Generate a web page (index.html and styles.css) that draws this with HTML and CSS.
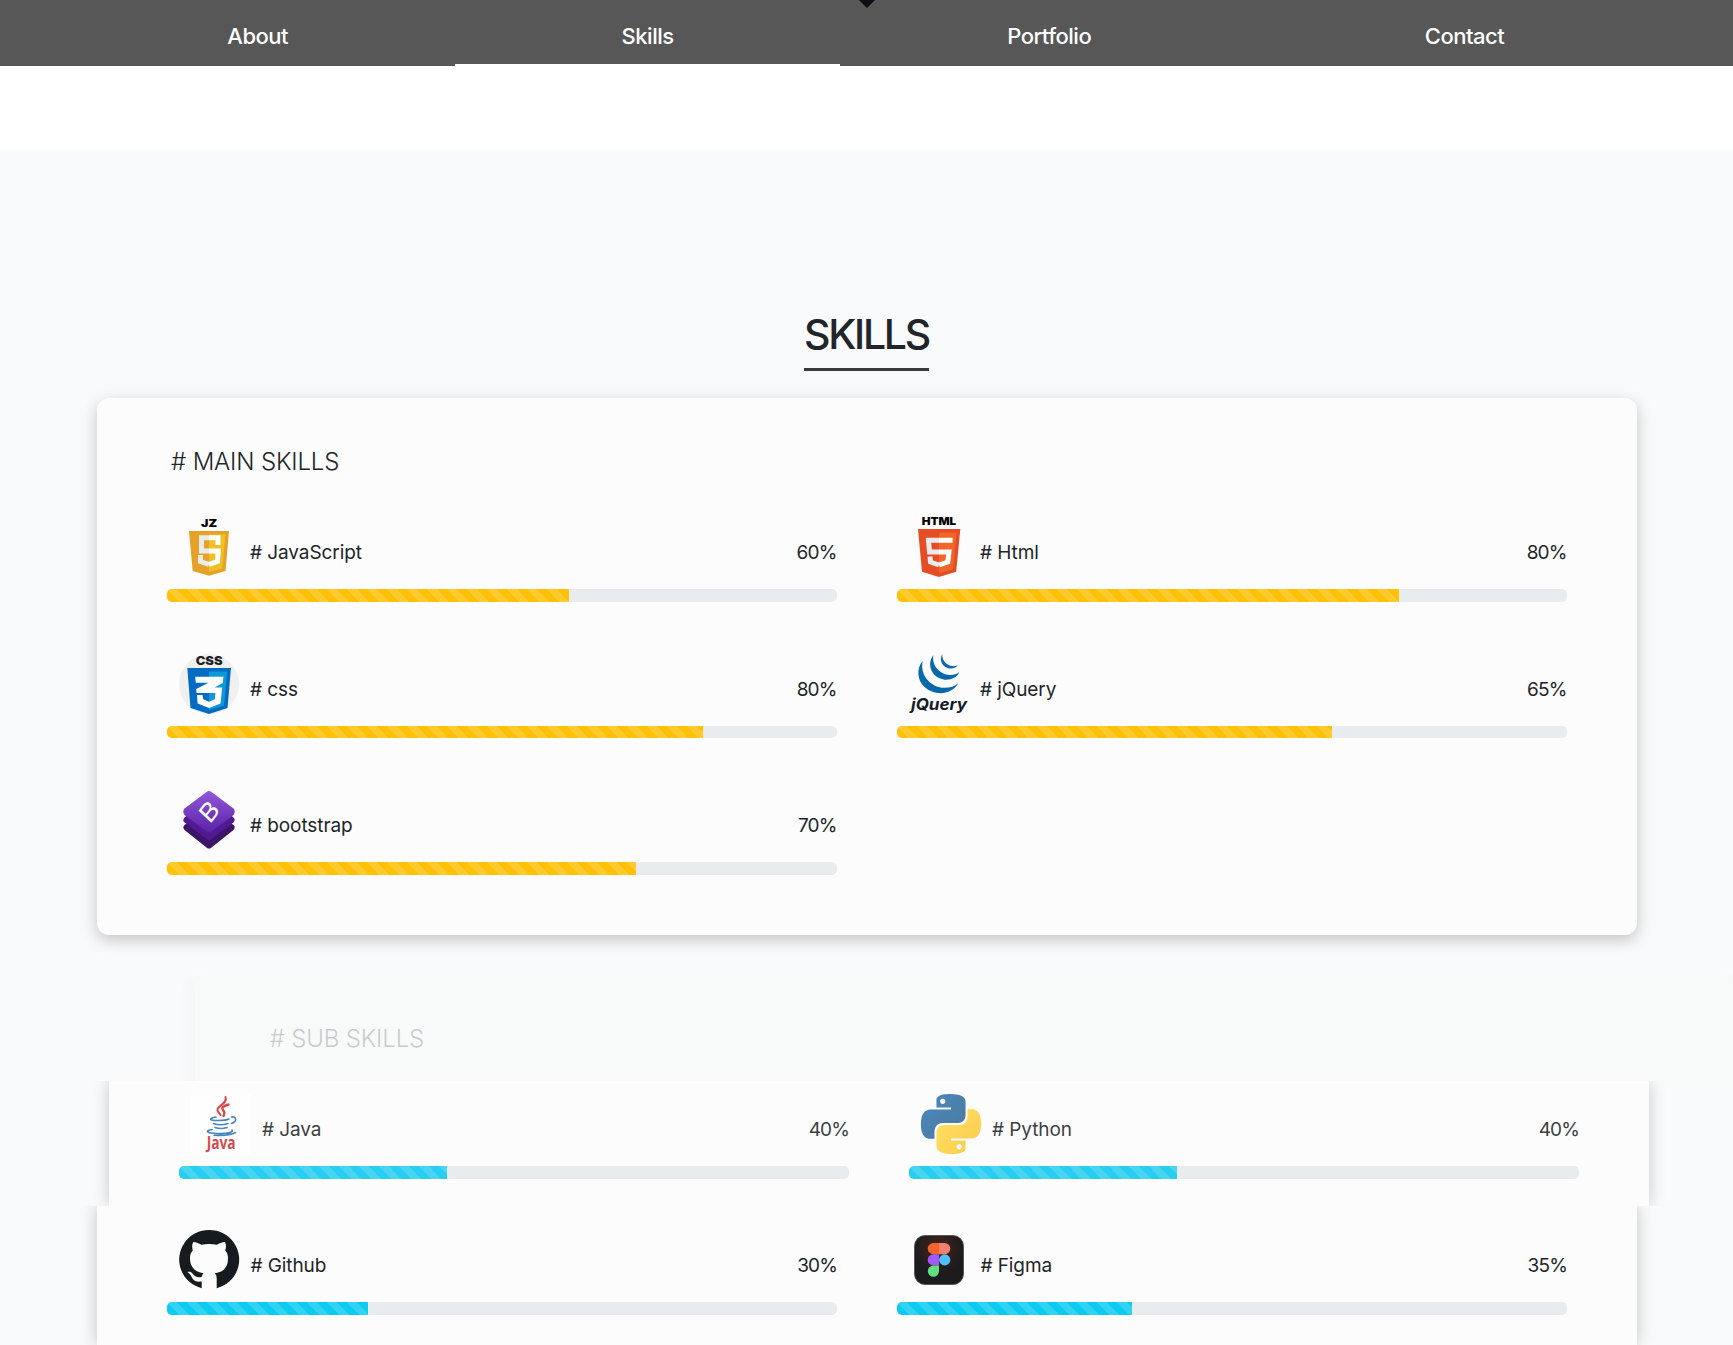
FILE: index.html
```html
<!DOCTYPE html>
<html lang="en">
<head>
<meta charset="utf-8">
<title>Skills</title>
<link rel="stylesheet" href="styles.css">
</head>
<body>
<nav class="nav">
  <a class="nav-item"><span>About</span></a>
  <a class="nav-item active"><span>Skills</span></a>
  <a class="nav-item"><span>Portfolio</span></a>
  <a class="nav-item"><span>Contact</span></a>
  <i class="nav-marker"></i>
</nav>
<main class="section">
  <h1 class="heading">SKILLS</h1>
  <section class="card main-card">
    <h2 class="card-title">#&nbsp;MAIN SKILLS</h2>
    <div class="skills">
      <div class="skill">
        <div class="info">
          <svg class="logo" viewBox="0 0 60 60">
            <text x="22" y="10" font-size="10.5" font-weight="900" textLength="16" lengthAdjust="spacingAndGlyphs">JZ</text>
            <path fill="#e5a228" d="M10 14H50L46.5 54 30 58.7 13.7 54Z"/><path fill="#f0bf25" d="M30 17.5H46.5L43.3 51.5 30 55Z"/>
            <path fill="none" stroke="#ebebeb" stroke-width="5" d="M30 20.8H22.5V34H30M21.5 38V44.5L30 47.3"/>
            <path fill="none" stroke="#fff" stroke-width="5" d="M30 20.8H39V28M30 34H39.2L38.5 44.5 30 47.3"/>
          </svg>
          <span class="name"># JavaScript</span><span class="pct">60%</span>
        </div>
        <div class="track"><div class="fill" style="width:60%"></div></div>
      </div>
      <div class="skill">
        <div class="info">
          <svg class="logo" viewBox="0 0 60 60">
            <text x="12.7" y="8.2" font-size="10.8" font-weight="900" textLength="34.5" lengthAdjust="spacingAndGlyphs">HTML</text>
            <path fill="#e44d26" d="M9 12H51.3L47.2 54.7 30 60 13 54.7Z"/><path fill="#f16529" d="M30 15.5H47.4L44 52 30 56.3Z"/>
            <path fill="none" stroke="#ebebeb" stroke-width="5" d="M30 23.2H19.5L20.5 35H30M21 39.5L21.5 45 30 48"/>
            <path fill="none" stroke="#fff" stroke-width="5" d="M30 23.2H43.6M30 35H40L38.8 45 30 48"/>
          </svg>
          <span class="name"># Html</span><span class="pct">80%</span>
        </div>
        <div class="track"><div class="fill" style="width:75%"></div></div>
      </div>
      <div class="skill">
        <div class="info">
          <svg class="logo" viewBox="0 0 60 60">
            <circle cx="30" cy="30" r="30" fill="#f0f0f0"/>
            <text x="16.7" y="10.6" font-size="11.5" font-weight="900" fill="#222" textLength="26.8" lengthAdjust="spacingAndGlyphs">CSS</text>
            <path fill="#026cc0" d="M8.3 14H52L48.5 54 30 60 11.5 54Z"/><path fill="#0f97dc" d="M30 17.5H48.2L45 51.5 30 56Z"/>
            <path fill="#fff" d="M16.2 22.7H44.4L43.8 29 35.5 33.5H43.2L41.5 49.5 30 54 18.6 49.5 18 41H23.6L24.2 45.3 30 47.7 35.8 45.3 36.4 39H17.5L17.2 35 29.5 28.7H16.8Z"/>
          </svg>
          <span class="name"># css</span><span class="pct">80%</span>
        </div>
        <div class="track"><div class="fill" style="width:80%"></div></div>
      </div>
      <div class="skill">
        <div class="info">
          <svg class="logo" viewBox="0 0 60 60">
            <g fill="#0868ac"><path d="M13.7 6.7C7 15 8.5 26 15 32.5 26 43 43 40.500 49.300 29.300 42 35.500 28 36 19.500 27 13 20 12.500 13 13.700 6.700Z"/>
            <path d="M24.300 1C18 10 22 20 30 24 38 28 47 25 50.300 18.300 45 22 37 22 31 17.500 25 13 23.500 7 24.300 1Z"/>
            <path d="M33.300 0C30 6 33 12 38.500 14 43 15.500 47 14 48.700 11.300 45 13 41 12.500 37.500 9.800 34 7 33 3.500 33.300 0Z"/></g>
            <text x="2" y="55.800" font-size="16" font-weight="700" font-style="italic" fill="#131b28" textLength="56" lengthAdjust="spacingAndGlyphs">jQuery</text>
          </svg>
          <span class="name"># jQuery</span><span class="pct">65%</span>
        </div>
        <div class="track"><div class="fill" style="width:65%"></div></div>
      </div>
      <div class="skill">
        <div class="info">
          <svg class="logo" viewBox="0 0 60 60">
            <defs><linearGradient id="bt" x1="0" y1="0" x2="0" y2="1"><stop offset="0" stop-color="#9158dc"/><stop offset="1" stop-color="#5b22a5"/></linearGradient></defs>
            <g stroke-width="7" stroke-linejoin="round">
            <path fill="#3b1569" stroke="#3b1569" d="M30 20.500L52 37.500 30 55 8 37.500Z"/>
            <path fill="#511a92" stroke="#511a92" d="M30 12L52 30 30 46.500 8 30Z"/></g>
            <path fill="url(#bt)" d="M27.500 2Q30 .2 32.500 2L54.500 18.500Q57 21.500 54.500 25L32.500 41.500Q30 43.200 27.500 41.500L5.500 25Q3 21.500 5.500 18.500Z"/>
            <text transform="translate(30 21.500) rotate(-52) skewX(-6) scale(1.15 1)" y="8.700" text-anchor="middle" font-size="24" font-weight="400" fill="#fff">B</text>
          </svg>
          <span class="name"># bootstrap</span><span class="pct">70%</span>
        </div>
        <div class="track"><div class="fill" style="width:70%"></div></div>
      </div>
    </div>
  </section>
</main>

<section class="slice slice-title">
  <div class="card"><h2 class="card-title">#&nbsp;SUB SKILLS</h2></div>
</section>
<section class="slice slice-middle">
  <div class="card">
    <div class="skills info-bars">
      <div class="skill">
        <div class="info">
          <svg class="logo" viewBox="0 0 60 60">
            <path fill="#fff" d="M0 0H60V60H0Z"/>
            <g fill="none" stroke="#d32f2f" stroke-linecap="round"><path stroke-width="2" d="M34.500 3C37 10 25 12 26.500 16.500 27 18.500 29 19.500 29.500 21"/><path stroke-width="2.400" d="M37.500 10.500C29 13 31 15 33 17.500 34 19 33 20.500 32.500 22"/></g>
            <g fill="none" stroke="#2f75b5" stroke-width="1.600" stroke-linecap="round"><path d="M25 23C17 24.500 18 26.500 27 26.500Q35 26.500 38 25M40.500 23C46 22 46 28 40.500 29.500M22.500 29.500Q29 32 37 29.500M24 33.500Q30 35.500 36 33.500"/>
            <path d="M21 35.500C13 37 16 39 26 39.500 36 40 43 38.500 41 36M23 41.200Q38 42.200 44.500 38.500"/></g>
            <text class="java-word" x="15.700" y="55" font-size="18" font-weight="700" fill="#cf3338" textLength="29" lengthAdjust="spacingAndGlyphs">Java</text>
          </svg>
          <span class="name"># Java</span><span class="pct">40%</span>
        </div>
        <div class="track"><div class="fill" style="width:40%"></div></div>
      </div>
      <div class="skill">
        <div class="info">
          <svg class="logo" viewBox="0 0 24 24">
            <defs><linearGradient id="pb" x1="0" y1="0" x2="1" y2="1"><stop offset="0" stop-color="#3279b5"/><stop offset="1" stop-color="#346892"/></linearGradient>
            <linearGradient id="pyel" x1="0" y1="0" x2="1" y2="1"><stop offset="0" stop-color="#ffe052"/><stop offset="1" stop-color="#ffc331"/></linearGradient></defs>
            <path fill="url(#pb)" d="M14.25.18l.9.2.73.26.59.3.45.32.34.34.25.34.16.33.1.3.04.26.02.2-.01.13V8.5l-.05.63-.13.55-.21.46-.26.38-.3.31-.33.25-.35.19-.35.14-.33.1-.3.07-.26.04-.21.02H8.77l-.69.05-.59.14-.5.22-.41.27-.33.32-.27.35-.2.36-.15.37-.1.35-.07.32-.04.27-.02.21v3.06H3.17l-.21-.03-.28-.07-.32-.12-.35-.18-.36-.26-.36-.36-.35-.46-.32-.59-.28-.73-.21-.88-.14-1.05-.05-1.23.06-1.22.16-1.04.24-.87.32-.71.36-.57.4-.44.42-.33.42-.24.4-.16.36-.1.32-.05.24-.01h.16l.06.01h8.16v-.83H6.18l-.01-2.75-.02-.37.05-.34.11-.31.17-.28.25-.26.31-.23.38-.2.44-.18.51-.15.58-.12.64-.1.71-.06.77-.04.84-.02 1.27.05zm-6.3 1.98l-.23.33-.08.41.08.41.23.34.33.22.41.09.41-.09.33-.22.23-.34.08-.41-.08-.41-.23-.33-.33-.22-.41-.09-.41.09z"/>
            <path fill="url(#pyel)" d="M21.040 6.110l.28.06.32.12.35.18.36.27.36.35.35.47.32.59.28.73.21.88.14 1.040.05 1.230-.06 1.230-.16 1.040-.24.86-.32.71-.36.57-.4.45-.42.33-.42.24-.4.16-.36.09-.32.05-.24.02-.16-.01h-8.220v.82h5.840l.01 2.760.02.36-.05.34-.11.31-.17.29-.25.25-.31.24-.38.2-.44.17-.51.15-.58.13-.64.09-.71.07-.77.04-.84.01-1.270-.04-1.070-.14-.9-.2-.73-.25-.59-.3-.45-.33-.34-.34-.25-.34-.16-.33-.1-.3-.04-.25-.02-.2.01-.13v-5.340l.05-.64.13-.54.21-.46.26-.38.3-.32.33-.24.35-.2.35-.14.33-.1.3-.06.26-.04.21-.02.13-.01h5.840l.69-.05.59-.14.5-.21.41-.28.33-.32.27-.35.2-.36.15-.36.1-.35.07-.32.04-.28.02-.21V6.070h2.090l.14.01zm-6.470 14.250l-.23.33-.08.41.08.41.23.33.33.23.41.08.41-.08.33-.23.23-.33.08-.41-.08-.41-.23-.33-.33-.23-.41-.08-.41.08z"/>
          </svg>
          <span class="name"># Python</span><span class="pct">40%</span>
        </div>
        <div class="track"><div class="fill" style="width:40%"></div></div>
      </div>
    </div>
  </div>
</section>
<section class="slice slice-end">
  <div class="card">
    <div class="skills info-bars">
      <div class="skill">
        <div class="info">
          <svg class="logo" viewBox="0 0 60 60">
            <path fill="#161b1f" d="M22.700 58.200A30 29.600 0 1 1 37.700 58.200V48Q37.700 44.800 35.800 43.200C45 42 49 37 49 28 49 25 48 22 46.200 20.500 47.500 17 47 14 46 12 43 12 40 13.500 38 14.700Q30 13.300 22.300 14.700C20 13.500 17 12 14.300 12 13 14 12.800 17 13.800 20.500 12 22 11 25 11 28 11 37 16 42 24.500 43.200Q23 44.600 22.700 47C18 48 15.500 46 13.500 43.500 12 41.500 10.500 41.500 8.300 42 11 43.500 12 45.500 13.500 48.500 15.500 51.500 18.500 52 22.700 51.500Z"/>
          </svg>
          <span class="name"># Github</span><span class="pct">30%</span>
        </div>
        <div class="track"><div class="fill" style="width:30%"></div></div>
      </div>
      <div class="skill">
        <div class="info">
          <svg class="logo" viewBox="0 0 60 60">
            <defs><radialGradient id="fr" cx=".5" cy=".25" r=".5"><stop offset="0" stop-color="#48231a"/><stop offset="1" stop-color="#1c1c1e"/></radialGradient></defs>
            <rect x="5.500" y="5.500" width="49" height="49" rx="10.500" fill="url(#fr)" stroke="#4a4a4c" stroke-width=".8"/>
            <path fill="#f2622c" d="M30 13H24.300A5.600 5.600 0 0 0 24.300 24.200H30Z"/><path fill="#f28070" d="M30 13H35.700A5.600 5.600 0 0 1 35.700 24.200H30Z"/>
            <path fill="#a259f5" d="M30 24.300H24.300A5.600 5.600 0 0 0 24.300 35.500H30Z"/><circle cx="35.700" cy="29.900" r="5.600" fill="#4fc0ff"/>
            <path fill="#62de7e" d="M30 35.600H24.300A5.600 5.600 0 1 0 30 41.200Z"/>
          </svg>
          <span class="name"># Figma</span><span class="pct">35%</span>
        </div>
        <div class="track"><div class="fill" style="width:35%"></div></div>
      </div>
    </div>
  </div>
</section>
</body>
</html>
```
FILE: styles.css
```css
* { box-sizing: border-box; }
html, body { height: 1345px; overflow: hidden; }
body {
  margin: 0;
  width: 1733px;
  background: #f8fafc;
  color: #212529;
  font-family: Inter, "Liberation Sans", sans-serif;
}
h1, h2 { margin: 0; }

.nav {
  position: relative;
  display: flex;
  height: 66px;
  padding: 0 62px 0 60.5px;
  background: #575757;
}
.nav-item {
  display: flex;
  flex: 1 1 auto;
  justify-content: center;
  padding-top: 22px;
  border-bottom: 2px solid transparent;
  color: #fff;
  font-size: 22px;
  font-weight: 500;
  line-height: 28px;
  letter-spacing: -0.5px;
}
.nav-item.active { border-bottom-color: #fff; }
.nav-marker {
  position: absolute;
  top: 0;
  left: 858.5px;
  border: 8.5px solid transparent;
  border-top-color: #0d0e12;
  border-bottom: 0;
}

.section {
  display: flex;
  flex-direction: column;
  align-items: center;
  height: 909px;
  padding-top: 232px;
  background: linear-gradient(#fff 84px, #f8fafc 84px);
}
.heading {
  width: 125px;
  height: 73px;
  border-bottom: 3px solid #39393c;
  font-size: 41px;
  font-weight: 500;
  line-height: 72px;
  letter-spacing: -2.3px;
}
.card {
  flex: none;
  width: 1540px;
  padding: 0 40px;
  border-radius: 12px;
  background: #fcfcfc;
  box-shadow: 0 5px 16px rgba(0, 0, 0, 0.22);
}
.main-card { height: 537px; margin-top: 27px; padding-top: 46px; }
.card-title {
  padding-left: 34.5px;
  font-size: 24px;
  font-weight: 300;
  line-height: 35px;
  letter-spacing: -0.15px;
}

.skills {
  display: grid;
  grid-template-columns: repeat(2, 730px);
}
.main-card .skills { padding-top: 38px; }
.skill { height: 136.6px; padding: 0 30px; }
.info {
  display: flex;
  align-items: flex-start;
  height: 72px;
  padding-left: 12px;
}
.logo { flex: none; width: 60px; height: 60px; overflow: visible; }
.logo text { font-family: Inter, sans-serif; }
.logo .java-word { font-family: "Open Sans", sans-serif; }
.name, .pct { padding-top: 23px; font-size: 19px; line-height: 26px; }
.name { padding-left: 11.5px; letter-spacing: -0.08px; }
.pct { margin-left: auto; letter-spacing: -0.85px; }
.track {
  height: 12.5px;
  overflow: hidden;
  border-radius: 5px;
  background: #e9ecef;
}
.fill {
  height: 100%;
  background-color: #ffc107;
  background-image: linear-gradient(45deg, rgba(255, 255, 255, 0.15) 25%, transparent 25%, transparent 50%, rgba(255, 255, 255, 0.15) 50%, rgba(255, 255, 255, 0.15) 75%, transparent 75%);
  background-size: 20px 20px;
}
.info-bars .fill { background-color: #0dcaf0; }

.slice { overflow: hidden; }
.slice-title { height: 106px; }
.slice-title .card {
  height: 400px;
  margin-left: 195px;
  padding-top: 46px;
  background: #fcfef4;
  box-shadow: 0 5px 16px rgba(0, 0, 0, 0.14);
  opacity: 0.22;
}
.slice-middle { height: 125px; }
.slice-middle .card { height: 125px; margin-left: 109px; padding-top: 13px; border-radius: 0; box-shadow: 0 0 16px rgba(0, 0, 0, 0.2); }
.slice-middle .info, .slice-middle .fill { opacity: 0.88; }
.slice-middle .name { padding-left: 11px; }
.slice-end { height: 139px; }
.slice-end .card { height: 139px; margin-left: 97px; padding-top: 24px; border-radius: 0; box-shadow: 0 0 16px rgba(0, 0, 0, 0.22); }
```
